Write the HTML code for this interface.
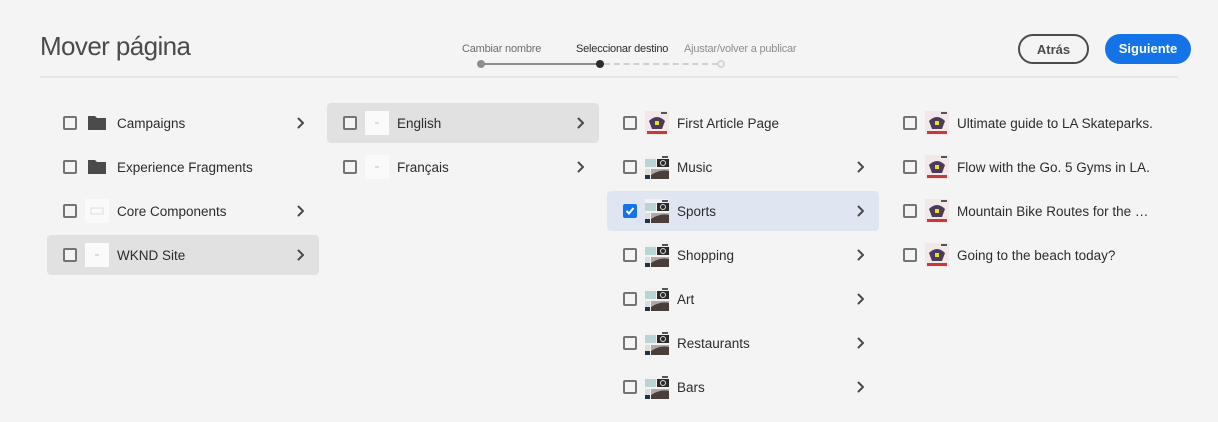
<!DOCTYPE html>
<html><head><meta charset="utf-8"><style>
*{box-sizing:border-box;margin:0;padding:0}
body{width:1218px;height:422px;background:#f4f4f4;font-family:"Liberation Sans",sans-serif;position:relative;overflow:hidden;color:#2c2c2c}
.abs{position:absolute}
h1{position:absolute;left:40px;top:31px;font-weight:300;font-size:26px;color:#4b4b4b;letter-spacing:-0.6px}
.hr{position:absolute;left:40px;top:76px;width:1138px;height:2px;background:#e6e6e6}
.step{position:absolute;top:43px;font-size:11px;color:#6e6e6e;letter-spacing:-0.2px}
.btn{position:absolute;top:34px;height:30px;border-radius:15px;font-size:13px;font-weight:bold;text-align:center;line-height:28px}
.row{position:absolute;width:272px;height:40px;border-radius:4px}
.row.sel{background:#e1e1e1}
.row.chk{background:#dfe6f1}
.cb{position:absolute;left:16px;top:13px;width:14px;height:14px;border:2px solid #747474;border-radius:2px;background:#f4f4f4}
.cb.on{background:#1473e6;border-color:#1473e6}
.ic{position:absolute;left:38px;top:8px;width:24px;height:24px}
.tx{position:absolute;left:70px;top:13px;font-size:13.5px;color:#2c2c2c;white-space:nowrap}
.ch{position:absolute;left:247px;top:13px}
</style></head><body>
<h1>Mover página</h1>
<div class="hr"></div>
<div class="step" style="left:462px">Cambiar nombre</div>
<div class="step" style="left:576px;color:#2c2c2c">Seleccionar destino</div>
<div class="step" style="left:684px;color:#8e8e8e">Ajustar/volver a publicar</div>
<div class="abs" style="left:481px;top:63px;width:119px;height:2px;background:#8e8e8e"></div>
<div class="abs" style="left:604px;top:63px;width:114px;border-top:2px dashed #d0d0d0"></div>
<div class="abs" style="left:477px;top:60px;width:8px;height:8px;border-radius:50%;background:#8e8e8e"></div>
<div class="abs" style="left:596px;top:60px;width:8px;height:8px;border-radius:50%;background:#2c2c2c"></div>
<div class="abs" style="left:717px;top:60px;width:8px;height:8px;border-radius:50%;border:2px solid #d5d5d5"></div>
<div class="btn" style="left:1018px;width:71px;border:2px solid #4b4b4b;color:#4b4b4b">Atrás</div>
<div class="btn" style="left:1105px;width:86px;background:#1473e6;color:#fff;line-height:30px">Siguiente</div>

<svg width="0" height="0" style="position:absolute">
<defs>
<symbol id="fold" viewBox="0 0 24 24"><path d="M3 5h7l2 2h9v12H3z" fill="#4b4b4b"/></symbol>
<symbol id="blank" viewBox="0 0 24 24"><rect width="24" height="24" fill="#fafafa"/><rect x="10" y="11" width="4" height="2" fill="#ddd"/></symbol>
<symbol id="core" viewBox="0 0 24 24"><rect width="24" height="24" fill="#fafafa"/><rect x="6" y="9" width="12" height="6" fill="none" stroke="#ddd"/></symbol>
<symbol id="art" viewBox="0 0 24 24"><rect width="24" height="24" fill="#f2e8e8"/><path d="M4 10 Q12 2 20 10 L17 18 H7z" fill="#4a3b5c"/><rect x="10" y="10" width="4" height="4" fill="#f0e010"/><rect x="2" y="20" width="20" height="3" fill="#c8393c"/><rect x="16" y="1" width="6" height="2" fill="#555"/></symbol>
<symbol id="site" viewBox="0 0 24 24"><rect width="24" height="24" fill="#f2f2f2"/><rect x="17" y="1" width="6" height="2" fill="#555"/><rect x="0" y="4" width="11" height="8" fill="#b9d4d4"/><rect x="12" y="4" width="12" height="8" fill="#2a2a2a"/><circle cx="18" cy="8" r="2.5" fill="none" stroke="#ddd"/><rect x="0" y="14" width="5" height="10" fill="#ddd"/><rect x="0" y="20" width="5" height="4" fill="#234"/><rect x="6" y="14" width="18" height="10" fill="#4a3e3a"/><path d="M6 20 Q15 14 24 16 V14 H6z" fill="#b0a8a4"/></symbol>
<symbol id="chev" viewBox="0 0 14 14"><path d="M4.5 2.5 L9 7 L4.5 11.5" fill="none" stroke="#4b4b4b" stroke-width="2" stroke-linecap="round" stroke-linejoin="round"/></symbol>
</defs></svg>

<div class="row" style="left:47px;top:103px"><div class="cb"></div><svg class="ic"><use href="#fold"/></svg><div class="tx">Campaigns</div><svg class="ch" width="14" height="14"><use href="#chev"/></svg></div>
<div class="row" style="left:47px;top:147px"><div class="cb"></div><svg class="ic"><use href="#fold"/></svg><div class="tx">Experience Fragments</div></div>
<div class="row" style="left:47px;top:191px"><div class="cb"></div><svg class="ic"><use href="#core"/></svg><div class="tx">Core Components</div><svg class="ch" width="14" height="14"><use href="#chev"/></svg></div>
<div class="row sel" style="left:47px;top:235px"><div class="cb"></div><svg class="ic"><use href="#blank"/></svg><div class="tx">WKND Site</div><svg class="ch" width="14" height="14"><use href="#chev"/></svg></div>
<div class="row sel" style="left:327px;top:103px"><div class="cb"></div><svg class="ic"><use href="#blank"/></svg><div class="tx">English</div><svg class="ch" width="14" height="14"><use href="#chev"/></svg></div>
<div class="row" style="left:327px;top:147px"><div class="cb"></div><svg class="ic"><use href="#blank"/></svg><div class="tx">Français</div><svg class="ch" width="14" height="14"><use href="#chev"/></svg></div>
<div class="row" style="left:607px;top:103px"><div class="cb"></div><svg class="ic"><use href="#art"/></svg><div class="tx">First Article Page</div></div>
<div class="row" style="left:607px;top:147px"><div class="cb"></div><svg class="ic"><use href="#site"/></svg><div class="tx">Music</div><svg class="ch" width="14" height="14"><use href="#chev"/></svg></div>
<div class="row chk" style="left:607px;top:191px"><div class="cb on"><svg width="10" height="10" viewBox="0 0 10 10" style="position:absolute;left:0;top:0"><path d="M1.5 5 L4 7.5 L8.5 2" fill="none" stroke="#fff" stroke-width="2"/></svg></div><svg class="ic"><use href="#site"/></svg><div class="tx">Sports</div><svg class="ch" width="14" height="14"><use href="#chev"/></svg></div>
<div class="row" style="left:607px;top:235px"><div class="cb"></div><svg class="ic"><use href="#site"/></svg><div class="tx">Shopping</div><svg class="ch" width="14" height="14"><use href="#chev"/></svg></div>
<div class="row" style="left:607px;top:279px"><div class="cb"></div><svg class="ic"><use href="#site"/></svg><div class="tx">Art</div><svg class="ch" width="14" height="14"><use href="#chev"/></svg></div>
<div class="row" style="left:607px;top:323px"><div class="cb"></div><svg class="ic"><use href="#site"/></svg><div class="tx">Restaurants</div><svg class="ch" width="14" height="14"><use href="#chev"/></svg></div>
<div class="row" style="left:607px;top:367px"><div class="cb"></div><svg class="ic"><use href="#site"/></svg><div class="tx">Bars</div><svg class="ch" width="14" height="14"><use href="#chev"/></svg></div>
<div class="row" style="left:887px;top:103px"><div class="cb"></div><svg class="ic"><use href="#art"/></svg><div class="tx">Ultimate guide to LA Skateparks.</div></div>
<div class="row" style="left:887px;top:147px"><div class="cb"></div><svg class="ic"><use href="#art"/></svg><div class="tx">Flow with the Go. 5 Gyms in LA.</div></div>
<div class="row" style="left:887px;top:191px"><div class="cb"></div><svg class="ic"><use href="#art"/></svg><div class="tx">Mountain Bike Routes for the …</div></div>
<div class="row" style="left:887px;top:235px"><div class="cb"></div><svg class="ic"><use href="#art"/></svg><div class="tx">Going to the beach today?</div></div>
</body></html>
